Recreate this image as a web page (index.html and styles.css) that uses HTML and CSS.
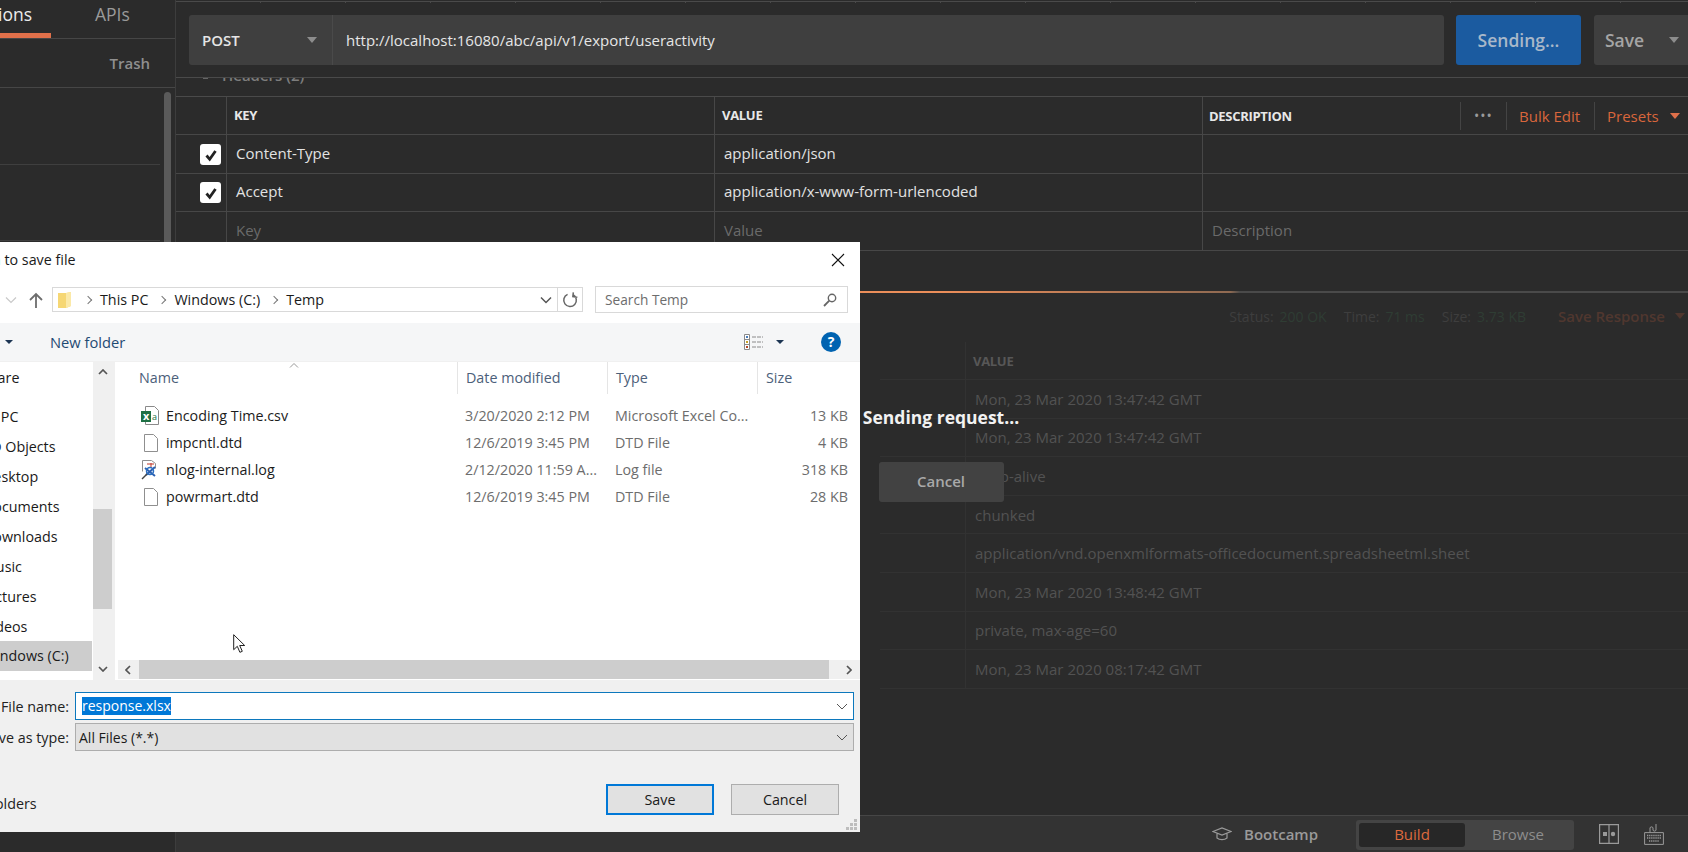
FILE: index.html
```html
<!DOCTYPE html>
<html lang="en">
<head>
<meta charset="utf-8">
<title>Postman</title>
<link rel="stylesheet" href="styles.css">
</head>
<body>
<div class="app">
  <aside class="sidebar">
    <div class="side-tabs">
      <div class="side-tab active"><span class="clip-tab">Collections</span></div>
      <div class="side-tab">APIs</div>
    </div>
    <div class="side-actions"><span>Trash</span></div>
    <div class="side-list">
      <div class="side-item"></div>
      <div class="side-item"></div>
      <div class="side-thumb"></div>
    </div>
  </aside>
  <main class="main">
    <div class="tab-strip"></div>
    <div class="req-row">
      <div class="url-group">
        <div class="method"><span>POST</span><i class="caret caret-grey"></i></div>
        <div class="url">http://localhost:16080/abc/api/v1/export/useractivity</div>
      </div>
      <div class="send">Sending...</div>
      <div class="save"><span>Save</span><i class="caret caret-grey"></i></div>
    </div>
    <div class="hdr-peek"><i class="hdr-caret"></i><span class="hdr-peek-text">Headers (2)</span></div>
    <div class="kv">
      <div class="kv-row kv-head">
        <div class="c0"></div>
        <div class="c1">KEY</div>
        <div class="c2">VALUE</div>
        <div class="c3"><span>DESCRIPTION</span>
          <div class="kv-tools">
            <span class="tool dots">•••</span>
            <span class="tool orange bulk">Bulk Edit</span>
            <span class="tool orange presets">Presets<i class="caret caret-orange"></i></span>
          </div>
        </div>
      </div>
      <div class="kv-row">
        <div class="c0"><span class="check"><svg viewBox="0 0 20 20" width="20" height="20"><path d="M5.500 10.500l3.200 3.800 5.800-8.300" fill="none" stroke="#222" stroke-width="2.800"/></svg></span></div>
        <div class="c1 val">Content-Type</div>
        <div class="c2 val">application/json</div>
        <div class="c3"></div>
      </div>
      <div class="kv-row">
        <div class="c0"><span class="check"><svg viewBox="0 0 20 20" width="20" height="20"><path d="M5.500 10.500l3.200 3.800 5.800-8.300" fill="none" stroke="#222" stroke-width="2.800"/></svg></span></div>
        <div class="c1 val">Accept</div>
        <div class="c2 val">application/x-www-form-urlencoded</div>
        <div class="c3"></div>
      </div>
      <div class="kv-row">
        <div class="c0"></div>
        <div class="c1 ph">Key</div>
        <div class="c2 ph">Value</div>
        <div class="c3 ph">Description</div>
      </div>
    </div>
    <section class="response">
      <div class="progress"></div>
      <div class="res-meta">
        <span class="m-l">Status:</span><span class="m-g">200 OK</span>
        <span class="m-l m-gap">Time:</span><span class="m-g">71 ms</span>
        <span class="m-l m-gap">Size:</span><span class="m-g">3.73 KB</span>
        <span class="m-save">Save Response</span><i class="caret caret-dim"></i>
      </div>
      <div class="res-table">
        <div class="res-row res-head"><div class="res-k"></div><div class="res-v">VALUE</div></div>
        <div class="res-row"><div class="res-k"></div><div class="res-v">Mon, 23 Mar 2020 13:47:42 GMT</div></div>
        <div class="res-row"><div class="res-k"></div><div class="res-v">Mon, 23 Mar 2020 13:47:42 GMT</div></div>
        <div class="res-row"><div class="res-k"></div><div class="res-v">keep-alive</div></div>
        <div class="res-row"><div class="res-k"></div><div class="res-v">chunked</div></div>
        <div class="res-row"><div class="res-k"></div><div class="res-v">application/vnd.openxmlformats-officedocument.spreadsheetml.sheet</div></div>
        <div class="res-row"><div class="res-k"></div><div class="res-v">Mon, 23 Mar 2020 13:48:42 GMT</div></div>
        <div class="res-row"><div class="res-k"></div><div class="res-v">private, max-age=60</div></div>
        <div class="res-row"><div class="res-k"></div><div class="res-v">Mon, 23 Mar 2020 08:17:42 GMT</div></div>
      </div>
      <div class="sending">
        <div class="sending-title">Sending request...</div>
        <div class="sending-cancel">Cancel</div>
      </div>
    </section>
    <footer class="status">
      <svg class="cap" viewBox="0 0 20 16" width="20" height="16"><path d="M1 5.500L10 2l9 3.500L10 9zM5 7.500v4.500c2.500 2.200 7.500 2.200 10 0V7.500" fill="none" stroke="#9a9a9a" stroke-width="1.200"/></svg>
      <span class="boot">Bootcamp</span>
      <div class="switch"><span class="sw on">Build</span><span class="sw">Browse</span></div>
      <svg class="st-ic1" viewBox="0 0 20 20" width="20" height="20"><path d="M.6.600h18.800v18.800H.6zM10 .6v18.800" fill="none" stroke="#9a9a9a" stroke-width="1.200"/><rect x="4" y="8" width="4" height="4" fill="#9a9a9a"/><circle cx="14" cy="10" r="2.200" fill="#9a9a9a"/></svg>
      <svg class="st-ic2" viewBox="0 0 20 22" width="20" height="22"><path d="M.6 9.600h18.800v11.800H.6zM6 9.500V5c0-1.500 3-1.500 3 0v2c0 1.500 3 1.500 3 0V1" fill="none" stroke="#9a9a9a" stroke-width="1"/><path d="M3 12.500h14M3 15h14M5 18h10" stroke="#9a9a9a" stroke-width="1.400" stroke-dasharray="1.300 .8"/></svg>
    </footer>
  </main>
</div>

<div class="dialog">
  <div class="d-title"><span>Select path to save file</span>
    <svg class="d-close" viewBox="0 0 14 14" width="14" height="14"><path d="M1 1l12 12M13 1L1 13" stroke="#111" stroke-width="1.100"/></svg>
  </div>
  <div class="d-nav">
    <svg class="chev-back" viewBox="0 0 12 8" width="12" height="8"><path d="M1 1.500l5 5 5-5" fill="none" stroke="#c9c9c9" stroke-width="1.200"/></svg>
    <svg class="up" viewBox="0 0 14 16" width="14" height="16"><path d="M7 16V2M1 8l6-6 6 6" fill="none" stroke="#6d6d6d" stroke-width="1.800"/></svg>
    <div class="addr">
      <svg class="folder" viewBox="0 0 13 16" width="13" height="16"><path d="M0 1h8l5-1v14l-5 2H0z" fill="#f6d774"/><path d="M8 1l5-1v14l-5 2z" fill="#fbe9a8"/></svg>
      <i class="sep-chev"></i><span>This PC</span><i class="sep-chev"></i><span>Windows (C:)</span><i class="sep-chev"></i><span>Temp</span>
      <svg class="addr-down" viewBox="0 0 12 8" width="12" height="8"><path d="M1 1.500l5 5 5-5" fill="none" stroke="#555" stroke-width="1.500"/></svg>
      <div class="refresh"><svg viewBox="0 0 16 16" width="16" height="16"><path d="M10.500 2.400A6.300 6.300 0 1 1 5 2.700M10.500 0v4.400H15" fill="none" stroke="#666" stroke-width="1.500" transform="rotate(6 8 8)"/></svg></div>
    </div>
    <div class="search"><span>Search Temp</span>
      <svg viewBox="0 0 14 14" width="14" height="14"><circle cx="9" cy="5" r="3.700" fill="none" stroke="#666" stroke-width="1.400"/><path d="M6.300 7.700L1 13" stroke="#666" stroke-width="1.800"/></svg>
    </div>
  </div>
  <div class="d-tools">
    <span class="organize">Organize</span><i class="tri"></i>
    <span class="newf">New folder</span>
    <svg class="viewic" viewBox="0 0 19 16" width="19" height="16"><path d="M.5.500h5v15h-5zM.5 5.500h5M.5 10.500h5" fill="#fff" stroke="#8a8a8a"/><rect x="2" y="2" width="2" height="2" fill="#4a7ebb"/><rect x="2" y="7" width="2" height="2" fill="#c9a227"/><rect x="2" y="12" width="2" height="2" fill="#b5482a"/><path d="M8 3h11M8 8h11M8 13h11" stroke="#8a8a8a" stroke-dasharray="4 1"/></svg>
    <i class="tri tri-view"></i>
    <span class="help">?</span>
  </div>
  <div class="d-body">
    <div class="tree">
      <div class="tree-list">
        <div class="tr t-share">Share</div>
        <div class="tr t-pc">This PC</div>
        <div class="tr">3D Objects</div>
        <div class="tr">Desktop</div>
        <div class="tr">Documents</div>
        <div class="tr">Downloads</div>
        <div class="tr">Music</div>
        <div class="tr">Pictures</div>
        <div class="tr">Videos</div>
        <div class="tr tr-sel">Windows (C:)</div>
      </div>
      <div class="vbar">
        <svg viewBox="0 0 10 6" width="10" height="6"><path d="M1 5l4-4 4 4" fill="none" stroke="#555" stroke-width="1.700"/></svg>
        <div class="vthumb"></div>
        <svg viewBox="0 0 10 6" width="10" height="6"><path d="M1 1l4 4 4-4" fill="none" stroke="#555" stroke-width="1.700"/></svg>
      </div>
    </div>
    <div class="files">
      <div class="f-head">
        <div class="fh f-name">Name<svg class="sort" viewBox="0 0 10 5" width="10" height="5"><path d="M1 4.500l4-4 4 4" fill="none" stroke="#999"/></svg></div>
        <div class="fh">Date modified</div>
        <div class="fh">Type</div>
        <div class="fh">Size</div>
      </div>
      <div class="f-rows">
        <div class="f-row">
          <div class="f-name fn"><svg viewBox="0 0 18 20" width="18" height="20"><path d="M4.500.500h9l4 4v14h-13z" fill="#fff" stroke="#8a8a8a"/><text class="xa" x="11" y="14">a</text><rect x="0" y="5" width="10" height="11" fill="#1d7044"/><text class="xl" x="2" y="14">x</text></svg><span>Encoding Time.csv</span></div>
          <div class="fd">3/20/2020 2:12 PM</div><div class="fd">Microsoft Excel Co...</div><div class="fd fs">13 KB</div>
        </div>
        <div class="f-row">
          <div class="f-name fn"><svg viewBox="0 0 18 20" width="18" height="20"><path d="M3.500 1.500h9l4 4v13h-13z" fill="#fff" stroke="#8f8f8f"/></svg><span>impcntl.dtd</span></div>
          <div class="fd">12/6/2019 3:45 PM</div><div class="fd">DTD File</div><div class="fd fs">4 KB</div>
        </div>
        <div class="f-row">
          <div class="f-name fn"><svg viewBox="0 0 18 20" width="18" height="20"><path d="M1.500.500h9l4 3v5M1.500.500v11" fill="none" stroke="#8f8f8f"/><path d="M4 8l10 8M14 7L5 15" stroke="#2c5fb0" stroke-width="2"/><circle cx="9" cy="11" r="3.500" fill="none" stroke="#2c6fc0" stroke-width="1.500"/><path d="M6 4h7M10 3v4" stroke="#c0392b"/><path d="M1 19l5-5" stroke="#444" stroke-width="1.500"/></svg><span>nlog-internal.log</span></div>
          <div class="fd">2/12/2020 11:59 A...</div><div class="fd">Log file</div><div class="fd fs">318 KB</div>
        </div>
        <div class="f-row">
          <div class="f-name fn"><svg viewBox="0 0 18 20" width="18" height="20"><path d="M3.500 1.500h9l4 4v13h-13z" fill="#fff" stroke="#8f8f8f"/></svg><span>powrmart.dtd</span></div>
          <div class="fd">12/6/2019 3:45 PM</div><div class="fd">DTD File</div><div class="fd fs">28 KB</div>
        </div>
      </div>
      <svg class="pointer" viewBox="0 0 13 20" width="13" height="20"><path d="M.7.700v15l3.600-3.400 2.600 6 2.400-1-2.600-5.800h5z" fill="#fff" stroke="#222"/></svg>
      <div class="hbar">
        <svg viewBox="0 0 6 10" width="6" height="10"><path d="M5 1L1 5l4 4" fill="none" stroke="#555" stroke-width="1.700"/></svg>
        <div class="hthumb"></div>
        <svg viewBox="0 0 6 10" width="6" height="10"><path d="M1 1l4 4-4 4" fill="none" stroke="#555" stroke-width="1.700"/></svg>
      </div>
    </div>
  </div>
  <div class="d-foot">
    <div class="field">
      <label class="f-label">File name:</label>
      <div class="box box-on"><span class="selected">response.xlsx</span><svg viewBox="0 0 12 7" width="12" height="7"><path d="M1 1l5 5 5-5" fill="none" stroke="#555"/></svg></div>
    </div>
    <div class="field">
      <label class="f-label">Save as type:</label>
      <div class="box box-off"><span>All Files (*.*)</span><svg viewBox="0 0 12 7" width="12" height="7"><path d="M1 1l5 5 5-5" fill="none" stroke="#555"/></svg></div>
    </div>
    <div class="d-actions">
      <span class="hide">Hide Folders</span>
      <span class="btn btn-def">Save</span>
      <span class="btn">Cancel</span>
    </div>
    <svg class="grip" viewBox="0 0 12 12" width="12" height="12"><path d="M8 0h3v3H8zM4 4h3v3H4zM8 4h3v3H8zM0 8h3v3H0zM4 8h3v3H4zM8 8h3v3H8z" fill="#bdbdbd"/></svg>
  </div>
</div>
</body>
</html>
```

FILE: styles.css
```css
* { box-sizing: border-box; }
html, body { margin: 0; height: 100%; overflow: hidden; background: #2b2b2b; }
body { font-family: "Open Sans", "Noto Sans", sans-serif; font-size: 15px; color: #ddd; }
i { display: block; font-style: normal; }

.app { display: flex; width: 1688px; height: 852px; }

/* Sidebar */
.sidebar { width: 176px; flex: none; border-right: 1px solid #3d3d3d; background: #2b2b2b; overflow: hidden; }
.side-tabs { display: flex; height: 39px; border-bottom: 1px solid #464646; margin-left: -55px; }
.side-tab { font-size: 17.500px; color: #9a9a9a; padding-top: 1px; line-height: 26px; margin-left: 44px; white-space: nowrap; }
.side-tab.active { width: 106px; flex: none; margin-left: 0; color: #ececec; border-bottom: 5px solid #e0704a; height: 38px; }
.clip-tab { display: block; width: 87px; direction: rtl; }
.side-actions { height: 49px; border-bottom: 1px solid #464646; display: flex; align-items: center; justify-content: flex-end; padding-right: 25px; color: #8f8f8f; font-size: 15px; font-weight: 600; }
.side-list { position: relative; height: 764px; padding-top: 1px; }
.side-item { height: 76px; width: 160px; border-bottom: 1px solid #3f3f3f; }
.side-thumb { position: absolute; left: 164px; top: 4px; width: 7px; height: 200px; background: #5a5a5a; border-radius: 4px; }

/* Main column */
.main { flex: none; width: 1512px; display: flex; flex-direction: column; background: #2b2b2b; overflow: hidden; }
.tab-strip { height: 15px; flex: none; border-top: 1px solid transparent; background: linear-gradient(#4a4a4a, #4a4a4a) 0 0 / 100% 1px no-repeat, repeating-linear-gradient(90deg, transparent 0, transparent 84px, #4a4a4a 84px, #4a4a4a 85px) 0 0 / 100% 2px no-repeat; }
.req-row { display: flex; height: 50px; flex: none; padding-left: 13px; gap: 12px; }
.url-group { width: 1255px; flex: none; display: flex; background: #3f3f3f; border-radius: 3px; }
.method { width: 144px; flex: none; display: flex; align-items: center; justify-content: space-between; padding: 0 15px 0 13px; border-right: 1px solid #4a4a4a; font-weight: 600; font-size: 15px; color: #e6e6e6; }
.url { flex: 1; padding-left: 13px; line-height: 50px; font-size: 15px; color: #e6e6e6; }
.send { width: 125px; flex: none; background: #1b5ba0; border-radius: 3px; line-height: 50px; text-align: center; color: #a9b8c9; font-weight: 600; font-size: 17.500px; }
.save { width: 120px; flex: none; background: #3f3f3f; border-radius: 3px; display: flex; align-items: center; gap: 25px; padding-left: 11px; color: #a5a5a5; font-weight: 600; font-size: 17.500px; margin-left: 1px; }
.caret { width: 0; height: 0; flex: none; border-left: 5px solid transparent; border-right: 5px solid transparent; border-top: 6px solid #888; }
.caret-grey { border-top-color: #8d8d8d; }
.caret-orange { border-top-color: #e0704a; margin-left: 11px; }
.caret-dim { border-top-color: #4f362e; margin-left: 10px; }

.hdr-peek { height: 19px; flex: none; margin-top: 12px; border-top: 1px solid #4a4a4a; overflow: hidden; padding-left: 46px; position: relative; }
.hdr-peek-text { display: block; margin-top: -12px; line-height: 19px; font-size: 15px; font-weight: 600; color: #7d7d7d; }
.hdr-caret { position: absolute; left: 27px; top: 0; width: 5px; height: 1px; background: #666; }

.kv { flex: none; border-top: 1px solid #4a4a4a; }
.kv-row { display: grid; grid-template-columns: 51px 488px 488px 485px; height: 38px; border-bottom: 1px solid #474747; align-items: stretch; }
.kv-row:nth-child(even) { height: 39px; }
.kv-row > div { border-right: 1px solid #474747; display: flex; align-items: center; padding-left: 8px; font-size: 15px; }
.kv-row > .c3 { border-right: 0; }
.kv-head > div { font-size: 13px; font-weight: 700; color: #e8e8e8; padding-left: 7px; padding-bottom: 2px; letter-spacing: -.3px; }
.c0.c0 { padding-left: 24px; padding-bottom: 0; }
.c3.c3 { padding-left: 6px; }
.val { color: #e2e2e2; padding-left: 9px !important; padding-bottom: 3px; }
.ph { color: #6a6a6a; padding-left: 9px !important; padding-bottom: 2px; }
.check { width: 21px; height: 21px; background: #fff; border-radius: 3px; display: block; }
.check svg { display: block; margin: 1px 0 0 1px; }
.kv-head .c3 { justify-content: space-between; padding-right: 0; padding-bottom: 0; }
.kv-tools { display: flex; height: 28px; align-items: center; }
.tool { height: 28px; line-height: 28px; border-left: 1px solid #444; font-size: 15px; font-weight: 400; letter-spacing: 0; display: flex; align-items: center; flex: none; white-space: nowrap; }
.dots { width: 46px; justify-content: center; color: #9a9a9a; font-size: 14px; letter-spacing: 1px; }
.orange { color: #d9663c; }
.bulk { width: 88px; padding-left: 12px; }
.presets { width: 94px; padding-left: 12px; }

/* Response */
.response { flex: 1; position: relative; padding-top: 40px; overflow: hidden; min-height: 0; }
.progress { height: 2px; background: linear-gradient(90deg, #eb8e5a 0, #eb8e5a 10%, #8f6a52 370px, #4a4a4a 380px, #4a4a4a 100%); margin-left: 684px; }
.res-meta { display: flex; align-items: center; justify-content: flex-end; height: 24px; margin-top: 11px; padding-right: 3px; font-size: 14px; white-space: nowrap; }
.m-l { color: #3e3e3e; margin-right: 6px; }
.m-g { color: #2f3d34; }
.m-gap { margin-left: 17px; }
.m-save { color: #50372f; font-weight: 600; font-size: 15px; margin-left: 32px; }
.res-table { margin: 14px 0 0 704px; }
.res-row { display: flex; height: 38.600px; border-bottom: 1px solid #323232; }
.res-head { height: 38px; }
.res-k { width: 86px; flex: none; border-right: 1px solid #323232; }
.res-v { padding-left: 9px; font-size: 15px; color: #525252; display: flex; align-items: center; white-space: nowrap; }
.res-head .res-v { font-size: 13px; font-weight: 700; color: #575757; padding-left: 7px; letter-spacing: -.3px; }
.sending { position: absolute; left: 687px; top: 153px; width: 156px; display: flex; flex-direction: column; align-items: center; }
.sending-title { font-size: 17.500px; font-weight: 700; color: #f2f2f2; white-space: nowrap; line-height: 26px; }
.sending-cancel { width: 125px; height: 40px; margin-top: 32px; background: #424242; border-radius: 3px; text-align: center; line-height: 38px; color: #a9a9a9; font-size: 15px; font-weight: 600; }

/* Status bar */
.status { height: 37px; flex: none; background: #333; border-top: 1px solid #464646; display: flex; align-items: center; justify-content: flex-end; padding-right: 24px; color: #9a9a9a; }
.cap { margin-right: 12px; }
.boot { font-weight: 600; font-size: 15px; margin-right: 38px; }
.switch { width: 218px; height: 30px; background: #444; border-radius: 3px; display: flex; padding: 3px; margin-right: 25px; margin-top: 2px; }
.sw { flex: 1; text-align: center; line-height: 23px; font-size: 15px; color: #8d8d8d; }
.sw.on { background: #272727; color: #dd6a3e; border-radius: 3px; }
.st-ic1 { margin-right: 25px; }

/* Dialog window */
.dialog { position: absolute; left: -140px; top: 242px; width: 1000px; height: 590px; background: #fff; display: flex; flex-direction: column; font-size: 14.300px; color: #1a1a1a; }
.d-title { height: 44px; flex: none; display: flex; align-items: center; justify-content: space-between; padding: 0 15px 9px 67px; }
.d-nav { height: 27px; flex: none; display: flex; align-items: center; padding-left: 145px; }
.chev-back { margin-right: 12px; flex: none; }
.up { margin-right: 9px; flex: none; }
.addr { width: 531px; flex: none; height: 25px; border: 1px solid #d9d9d9; display: flex; align-items: center; padding-left: 5px; white-space: nowrap; }
.folder { margin-right: 3px; flex: none; }
.sep-chev { width: 6px; height: 6px; flex: none; border-top: 1px solid #777; border-right: 1px solid #777; transform: rotate(45deg); margin: 0 9px 0 11px; }
.addr-down { margin-left: auto; margin-right: 5px; flex: none; }
.refresh { width: 25px; height: 23px; flex: none; border-left: 1px solid #d9d9d9; display: flex; align-items: center; justify-content: center; }
.search { width: 253px; flex: none; height: 27px; margin-left: 12px; border: 1px solid #d9d9d9; display: flex; align-items: center; justify-content: space-between; padding: 0 10px 0 9px; color: #6d6d6d; font-size: 13.700px; }
.d-tools { height: 38px; flex: none; margin-top: 10px; background: #f5f6f7; display: flex; align-items: center; padding-left: 70px; }
.organize { color: #2a3f55; width: 75px; flex: none; white-space: nowrap; overflow: hidden; }
.tri { width: 0; height: 0; flex: none; border-left: 4px solid transparent; border-right: 4px solid transparent; border-top: 4px solid #1c3553; }
.newf { color: #1f4a73; margin-left: 37px; font-size: 14.700px; }
.viewic { margin-left: auto; flex: none; }
.tri-view { margin-left: 13px; }
.help { width: 20px; height: 20px; flex: none; border-radius: 50%; background: #0063b1; color: #fff; font-weight: 700; font-size: 14px; text-align: center; line-height: 20px; margin: 0 19px 0 37px; }
.d-body { height: 319px; flex: none; display: flex; border-top: 1px solid #f0f0f0; }
.tree { width: 255px; flex: none; display: flex; background: #f0f0f0; padding-right: 3px; }
.tree-list { width: 233px; flex: none; background: #fff; padding-top: 1px; }
.tr { height: 30px; line-height: 30px; padding-left: 123px; white-space: nowrap; }
.t-share { padding-left: 121px; }
.t-pc { padding-left: 110px; height: 39px; padding-top: 9px; }
.tr-sel { background: #cdcdcd; margin-right: 1px; margin-top: -1px; }
.vbar { flex: 1; display: flex; flex-direction: column; align-items: center; padding: 7px 0 8px; background: #f0f0f0; position: relative; }
.vthumb { position: absolute; left: 0; right: 0; top: 147px; height: 100px; background: #cdcdcd; }
.vbar svg:last-child { margin-top: auto; }
.files { flex: 1; background: #fff; display: flex; flex-direction: column; position: relative; }
.f-head, .f-row { display: grid; grid-template-columns: 342px 150px 150px 100px; }
.f-head { height: 31px; flex: none; }
.fh { color: #4c607a; border-left: 1px solid #e5e5e5; line-height: 32px; padding-left: 8px; position: relative; }
.fh.f-name { border-left: 0; padding-left: 24px; }
.sort { position: absolute; left: 174px; top: 1px; }
.f-rows { padding-top: 9px; flex: 1; }
.f-row { height: 27px; align-items: center; }
.fn { display: flex; align-items: center; gap: 7px; padding-left: 26px; color: #1c1c1c; }
.fn svg { flex: none; }
.fd { color: #6d6d6d; padding-left: 8px; white-space: nowrap; overflow: hidden; }
.fs { text-align: right; padding: 0 9px 0 0; }
.xl { font: 700 11px "Open Sans", sans-serif; fill: #fff; }
.xa { font: 400 9px "Open Sans", sans-serif; fill: #1d7044; }
.pointer { position: absolute; left: 118px; top: 272px; }
.hbar { height: 19px; flex: none; margin-left: 3px; background: #f0f0f0; display: flex; align-items: center; position: relative; justify-content: space-between; padding: 0 8px 0 7px; margin-bottom: 1px; }
.hthumb { position: absolute; left: 21px; width: 690px; top: 0; bottom: 0; background: #cdcdcd; }
.d-foot { flex: 1; background: #f0f0f0; padding: 12px 6px 0 0; position: relative; }
.field { display: flex; align-items: center; height: 28px; margin-bottom: 3px; }
.f-label { width: 215px; flex: none; text-align: right; padding-right: 6px; white-space: nowrap; color: #222; }
.box { width: 779px; flex: none; height: 28px; display: flex; align-items: center; justify-content: space-between; padding: 0 4px 0 6px; font-size: 14px; }
.box svg { margin-right: 1px; }
.box-on { background: #fff; border: 1px solid #0c78bd; }
.box-off { background: #e1e1e1; border: 1px solid #adadad; padding-left: 3px; }
.selected { background: #0078d7; color: #fff; line-height: 18px; }
.d-actions { display: flex; align-items: center; margin-top: 33px; height: 31px; }
.hide { width: 746px; flex: none; padding-left: 93px; margin-bottom: -8px; color: #222; }
.btn { width: 108px; flex: none; height: 31px; border: 1px solid #adadad; background: #e1e1e1; text-align: center; line-height: 29px; color: #1a1a1a; margin-right: 17px; }
.btn-def { border: 2px solid #0078d7; line-height: 27px; }
.grip { position: absolute; right: 2px; bottom: 1px; }
```
